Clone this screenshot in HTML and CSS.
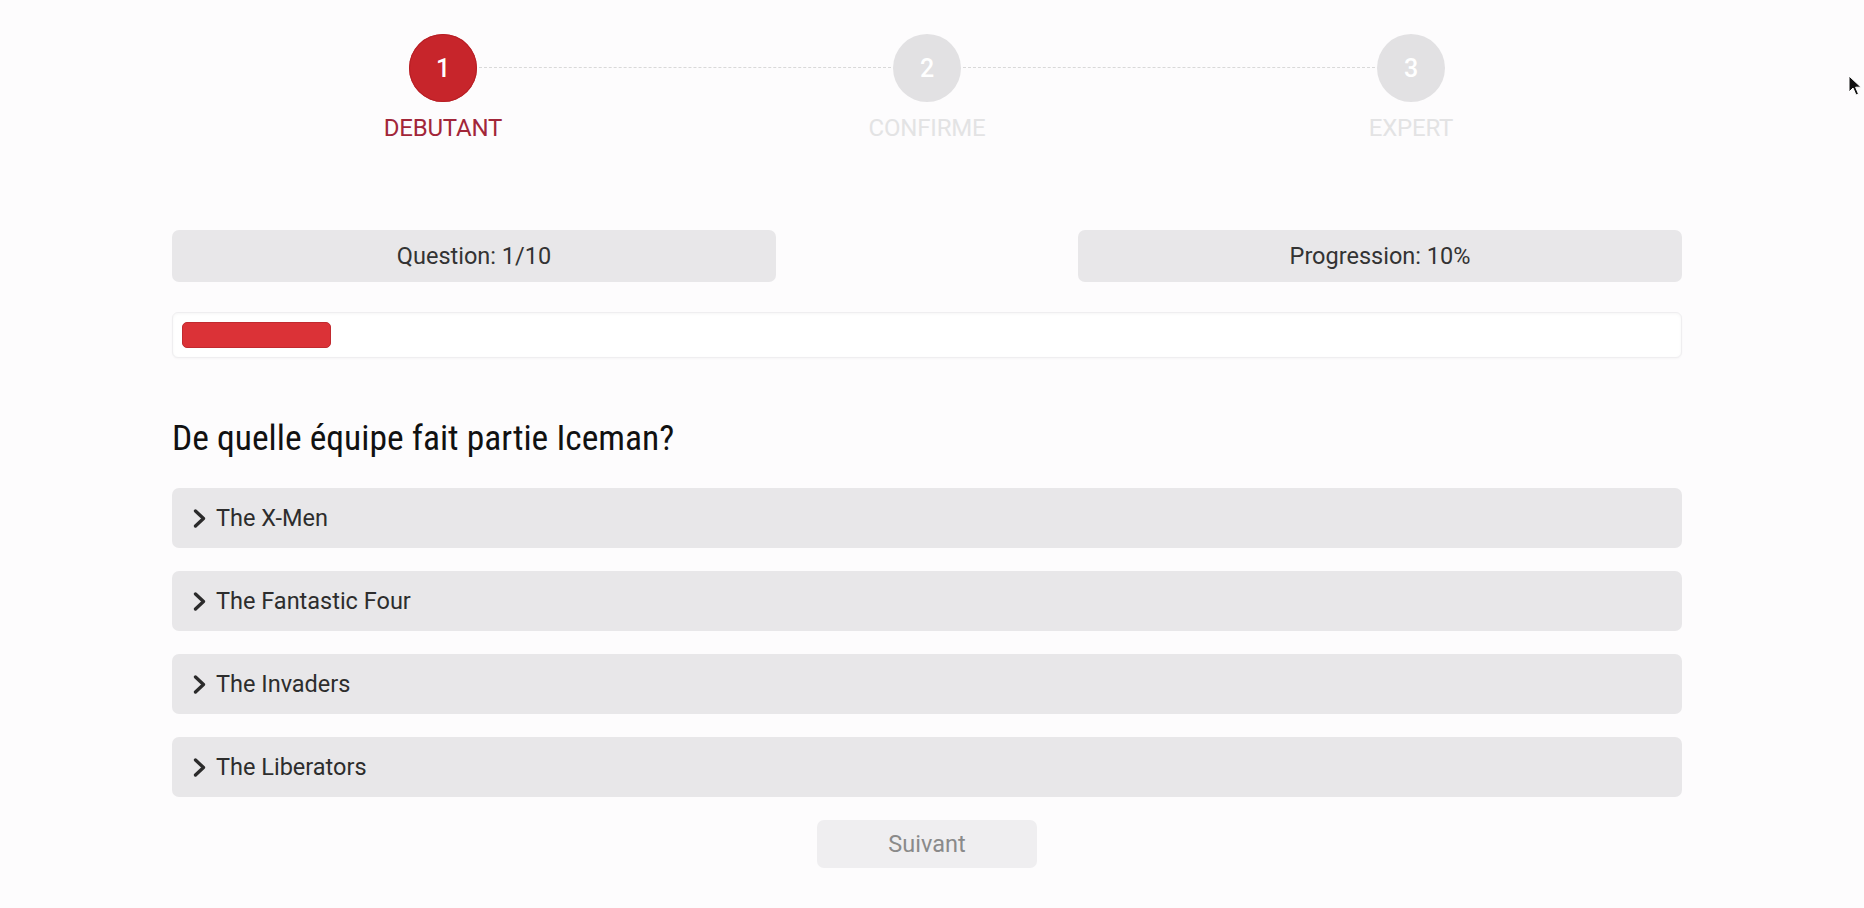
FILE: index.html
```html
<!DOCTYPE html>
<html lang="fr">
<head>
<meta charset="utf-8">
<title>Quiz</title>
<link rel="stylesheet" href="styles.css">
</head>
<body>
<main class="page">
  <ol class="stepper">
    <li class="step active">
      <span class="circle">1</span>
      <span class="label">DEBUTANT</span>
    </li>
    <li class="step">
      <span class="circle">2</span>
      <span class="label">CONFIRME</span>
    </li>
    <li class="step">
      <span class="circle">3</span>
      <span class="label">EXPERT</span>
    </li>
  </ol>

  <div class="stats">
    <div class="stat">Question: 1/10</div>
    <div class="stat">Progression: 10%</div>
  </div>

  <div class="track">
    <div class="bar" style="width: 10%"></div>
  </div>

  <h2 class="question">De quelle équipe fait partie Iceman?</h2>

  <ul class="answers">
    <li class="answer"><svg class="chev" viewBox="0 0 13 19" width="13" height="19"><polyline points="2.5,2 10.5,9.5 2.5,17"/></svg><span>The X-Men</span></li>
    <li class="answer"><svg class="chev" viewBox="0 0 13 19" width="13" height="19"><polyline points="2.5,2 10.5,9.5 2.5,17"/></svg><span>The Fantastic Four</span></li>
    <li class="answer"><svg class="chev" viewBox="0 0 13 19" width="13" height="19"><polyline points="2.5,2 10.5,9.5 2.5,17"/></svg><span>The Invaders</span></li>
    <li class="answer"><svg class="chev" viewBox="0 0 13 19" width="13" height="19"><polyline points="2.5,2 10.5,9.5 2.5,17"/></svg><span>The Liberators</span></li>
  </ul>

  <div class="actions">
    <button class="next" type="button">Suivant</button>
  </div>
</main>
<svg class="cursor" viewBox="0 0 14 22" width="14" height="22"><path d="M1 1 L1 17 L5 13 L8 20 L10.5 19 L7.6 12.2 L13 12.2 Z"/></svg>
</body>
</html>
```
FILE: styles.css
```css
* { box-sizing: border-box; }

html, body {
  margin: 0;
  padding: 0;
}

body {
  background: #fdfcfd;
  font-family: Roboto, "Liberation Sans", sans-serif;
  color: #333;
  height: 908px;
  overflow: hidden;
  position: relative;
}

.page {
  width: 1510px;
  margin-left: 172px;
  padding-top: 34px;
}

/* Stepper */
.stepper {
  list-style: none;
  margin: 0 29px;
  padding: 0;
  display: grid;
  grid-template-columns: repeat(3, 1fr);
}

.step {
  position: relative;
  display: flex;
  flex-direction: column;
  align-items: center;
}

.step:not(:last-child)::after {
  content: "";
  position: absolute;
  top: 33px;
  left: calc(50% + 36px);
  right: calc(-50% + 36px);
  border-top: 1px dashed #d9d9d9;
}

.circle {
  width: 68px;
  height: 68px;
  border-radius: 50%;
  background: #e2e1e3;
  color: #fff;
  font-size: 25px;
  font-weight: 500;
  display: flex;
  align-items: center;
  justify-content: center;
}

.label {
  margin-top: 12px;
  font-size: 24px;
  line-height: 28px;
  color: #e3e3e4;
  letter-spacing: -0.2px;
}

.step.active .circle {
  background: #c7252b;
  box-shadow: inset 0 0 0 1px #b71f25;
}

.step.active .label {
  color: #a22639;
}

/* Stats */
.stats {
  display: flex;
  justify-content: space-between;
  margin-top: 88px;
}

.stat {
  width: 40%;
  height: 52px;
  border-radius: 7px;
  background: #e8e7e9;
  display: flex;
  align-items: center;
  justify-content: center;
  font-size: 23.5px;
  color: #333;
}

/* Progress */
.track {
  margin-top: 30px;
  height: 46px;
  padding: 9px 9px;
  border-radius: 6px;
  background: #fff;
  border: 1px solid #efeef0;
  box-shadow: inset 0 1px 3px rgba(0, 0, 0, 0.04), 0 1px 2px rgba(0, 0, 0, 0.03);
}

.bar {
  height: 26px;
  border-radius: 5px;
  background: #db3237;
  border: 1px solid #c12a2f;
}

/* Question */
.question {
  margin: 60px 0 30px;
  font-family: "Roboto Condensed", "Liberation Sans Narrow", Roboto, sans-serif;
  font-weight: 400;
  font-size: 35.5px;
  line-height: 40px;
  color: #111;
}

.answers {
  list-style: none;
  margin: 0;
  padding: 0;
  display: flex;
  flex-direction: column;
  gap: 23px;
}

.answer {
  height: 60px;
  border-radius: 7px;
  background: #e8e7e9;
  display: flex;
  align-items: center;
  padding-left: 21px;
  gap: 10px;
  font-size: 23.5px;
  color: #2d2d2d;
}

.chev polyline {
  fill: none;
  stroke: #2b2b2b;
  stroke-width: 3.3;
  stroke-linecap: round;
  stroke-linejoin: round;
}

.actions {
  display: flex;
  justify-content: center;
  margin-top: 23px;
}

.next {
  width: 220px;
  height: 48px;
  border: none;
  border-radius: 7px;
  background: #efeef0;
  color: #8a8a8a;
  font-family: Roboto, "Liberation Sans", sans-serif;
  font-size: 23.5px;
}

.cursor {
  position: absolute;
  top: 75px;
  left: 1848px;
}

.cursor path {
  fill: #111;
  stroke: #fff;
  stroke-width: 1;
}
```
